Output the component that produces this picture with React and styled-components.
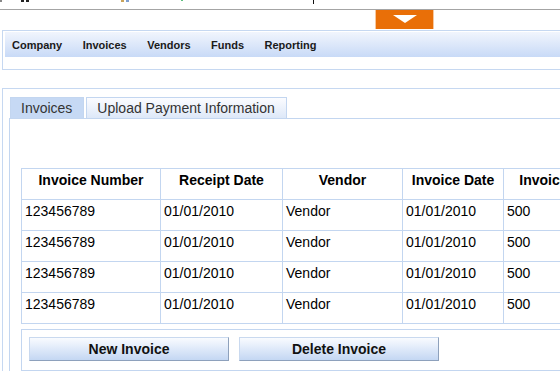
import React from 'react'
import styled, { createGlobalStyle } from 'styled-components'

const Global = createGlobalStyle`
  html, body { margin: 0; padding: 0; overflow: hidden; background: #fff; }
  body { font-family: "Liberation Sans", Arial, sans-serif; color: #000; }
`;

const Page = styled.div`
  width: 760px;
`;

const TopStrip = styled.div`
  height: 9px;
  display: flex;
  align-items: flex-start;
`;

const Mark = styled.span`
  display: block;
  margin-left: ${p => p.$at}px;
  width: ${p => p.$w || 3}px;
  height: ${p => p.$h || 2}px;
  background: ${p => p.$c || '#333'};
`;

const Rule = styled.div`
  height: 1px;
  background: #a4a4a4;
`;

const OrangeRow = styled.div`
  height: 20px;
  padding-left: 375px;
`;

const OrangeTab = styled.div`
  width: 59px;
  height: 19px;
  box-sizing: border-box;
  background: #e96f08;
  border-left: 1px solid #f7c89f;
  border-right: 1px solid #f7c89f;
  display: flex;
  justify-content: center;
  padding-top: 5px;
`;

const NavPanel = styled.div`
  margin-left: 2px;
  border: 1px solid #c6d8f1;
  border-right: none;
  padding: 1px 0 12px 2px;
`;

const NavBar = styled.div`
  height: 25px;
  display: flex;
  align-items: center;
  gap: 20.5px;
  padding-left: 7px;
  background: linear-gradient(#f1f5fd, #c8daf7);
  font-size: 11px;
  font-weight: bold;
  color: #1a1a1a;
`;

const MainPanel = styled.div`
  margin: 18px 0 0 2px;
  border-top: 1px solid #c6d8f1;
  border-left: 1px solid #c6d8f1;
  padding: 8px 0 0 6px;
`;

const Tabs = styled.div`
  display: flex;
  gap: 2px;
  margin-left: 1px;
`;

const Tab = styled.div`
  height: 21px;
  box-sizing: border-box;
  padding: 0 11px 0 10px;
  border: 1px solid #c3d6f0;
  border-bottom: none;
  font-size: 14px;
  line-height: 20px;
  color: #333;
  background: ${p => p.$active ? '#c6d9f4' : 'linear-gradient(#fbfcff, #dde8f8)'};
`;

const TabPanel = styled.div`
  border-top: 1px solid #c3d6f0;
  border-left: 1px solid #c3d6f0;
  padding: 49px 0 0 11px;
`;

const Table = styled.table`
  border-collapse: collapse;
  table-layout: fixed;
  font-size: 14px;
  td, th {
    border: 1px solid #c3d6f0;
    height: 31px;
    box-sizing: border-box;
    padding: 3px 3px 0;
    vertical-align: top;
    line-height: 16px;
    white-space: nowrap;
    overflow: hidden;
  }
  th { text-align: center; font-weight: bold; }
  td { text-align: left; }
`;

const ButtonPanel = styled.div`
  margin-top: 5px;
  border: 1px solid #c3d6f0;
  border-right: none;
  padding: 7px 7px 9px;
  display: flex;
  gap: 10px;
`;

const Button = styled.button`
  width: 200px;
  height: 24px;
  box-sizing: border-box;
  font-family: inherit;
  font-size: 14px;
  font-weight: bold;
  color: #111;
  background: linear-gradient(#f9fbff, #c4d7f3);
  border: 1px solid #c9d9ef;
  border-right-color: #8ea1bc;
  border-bottom-color: #8ea1bc;
  padding: 0;
`;

const navItems = ['Company', 'Invoices', 'Vendors', 'Funds', 'Reporting'];
const columns = [
  ['Invoice Number', 139],
  ['Receipt Date', 122],
  ['Vendor', 120],
  ['Invoice Date', 101],
  ['Invoice Amount', 136],
];
const rows = Array.from({ length: 4 }, () => ['123456789', '01/01/2010', 'Vendor', '01/01/2010', '500']);

export default function App() {
  return (
    <Page>
      <Global />
      <TopStrip>
        <Mark $at={0} $w={2} $h={2} $c="#888" />
        <Mark $at={19} $w={3} $c="#222" />
        <Mark $at={2} $w={3} $c="#222" />
        <Mark $at={92} $w={3} $c="#c9a35a" />
        <Mark $at={2} $w={3} $c="#7f9fcf" />
        <Mark $at={52} $w={2} $h={1} $c="#5fbf7f" />
        <Mark $at={130} $w={1} $h={4} $c="#111" />
      </TopStrip>
      <Rule />
      <OrangeRow>
        <OrangeTab>
          <svg width="24" height="8" viewBox="0 0 24 8">
            <polygon points="0,0 24,0 12,8" fill="#fff" />
          </svg>
        </OrangeTab>
      </OrangeRow>
      <NavPanel>
        <NavBar>
          {navItems.map(n => <span key={n}>{n}</span>)}
        </NavBar>
      </NavPanel>
      <MainPanel>
        <Tabs>
          <Tab $active>Invoices</Tab>
          <Tab>Upload Payment Information</Tab>
        </Tabs>
        <TabPanel>
          <Table>
            <colgroup>
              {columns.map(([c, w]) => <col key={c} style={{ width: w }} />)}
            </colgroup>
            <thead>
              <tr>{columns.map(([c]) => <th key={c}>{c}</th>)}</tr>
            </thead>
            <tbody>
              {rows.map((r, i) => (
                <tr key={i}>{r.map((v, j) => <td key={j}>{v}</td>)}</tr>
              ))}
            </tbody>
          </Table>
          <ButtonPanel>
            <Button>New Invoice</Button>
            <Button>Delete Invoice</Button>
          </ButtonPanel>
        </TabPanel>
      </MainPanel>
    </Page>
  )
}
